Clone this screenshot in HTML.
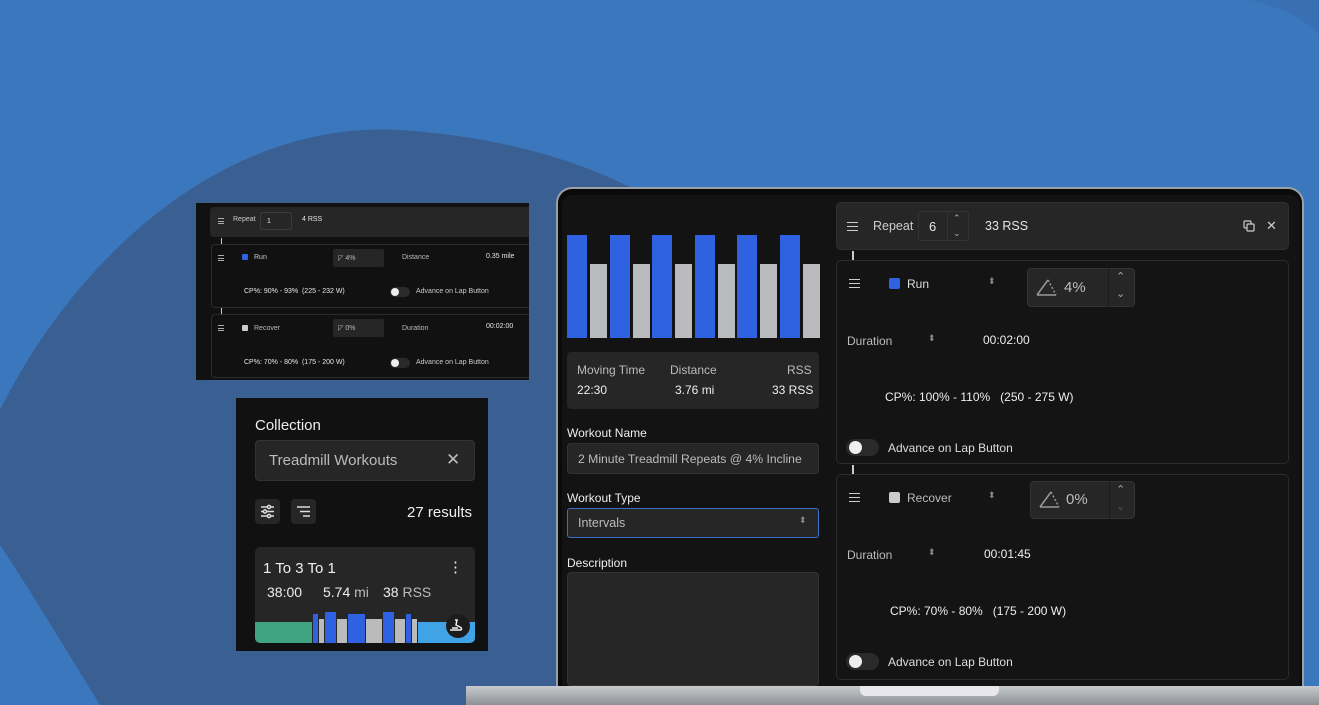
<!DOCTYPE html>
<html><head><meta charset="utf-8"><style>
*{margin:0;padding:0;box-sizing:border-box}
body{width:1319px;height:705px;overflow:hidden;position:relative;background:#3a77bc;font-family:"Liberation Sans",sans-serif;color:#e6e6e6}
.a{position:absolute}
.t{position:absolute;white-space:nowrap}
.card{position:absolute;background:#141414;border:1px solid #2c2c2c;border-radius:5px}
.ham{position:absolute;width:11px;height:9px;border-top:1.5px solid #ccc;border-bottom:1.5px solid #ccc}
.ham:after{content:"";position:absolute;left:0;right:0;top:2.5px;border-top:1.5px solid #ccc}
.sham{position:absolute;width:6px;height:6px;border-top:1px solid #aaa;border-bottom:1px solid #aaa}
.sham:after{content:"";position:absolute;left:0;right:0;top:1.5px;border-top:1px solid #aaa}
.tog{position:absolute;width:33px;height:17px;border-radius:9px;background:#2a2a2a}
.tog:after{content:"";position:absolute;left:3px;top:2px;width:13px;height:13px;border-radius:50%;background:#eee}
.stog{position:absolute;width:20px;height:10px;border-radius:5px;background:#2a2a2a}
.stog:after{content:"";position:absolute;left:1px;top:1px;width:8px;height:8px;border-radius:50%;background:#eee}
</style></head><body>
<svg class="a" style="left:0;top:0" width="1319" height="705">
<path d="M0 410 C80 250 230 120 400 130 C520 138 620 170 700 230 L700 705 L100 705 C60 640 30 590 0 545 Z" fill="#3a5f93"/>
<path d="M1250 0 C1285 8 1305 20 1319 35 L1319 0 Z" fill="#3970b3"/>
</svg>

<!-- small panel 1 -->
<div class="a" style="left:196px;top:203px;width:333px;height:177px;background:#111"></div>
<div class="a" style="left:210px;top:207px;width:319px;height:30px;background:#262626;border-radius:4px 0 0 4px"></div>
<div class="sham" style="left:218px;top:218px"></div>
<div class="t" style="left:233px;top:216px;font-size:7px;color:#ccc">Repeat</div>
<div class="a" style="left:260px;top:212px;width:32px;height:18px;border:1px solid #3a3a3a;border-radius:2px"></div>
<div class="t" style="left:267px;top:218px;font-size:7px">1</div>
<div class="t" style="left:302px;top:216px;font-size:7px">4 RSS</div>
<div class="a" style="left:221px;top:238px;width:1px;height:6px;background:#ccc"></div>
<div class="a" style="left:211px;top:244px;width:318px;height:64px;border:1px solid #2c2c2c;border-right:none;border-radius:4px 0 0 4px"></div>
<div class="sham" style="left:218px;top:255px"></div>
<div class="a" style="left:242px;top:254px;width:6px;height:6px;background:#2f62e0;border-radius:1px"></div>
<div class="t" style="left:254px;top:254px;font-size:7px;color:#ccc">Run</div>
<div class="a" style="left:333px;top:249px;width:51px;height:18px;background:#262626;border-radius:2px"></div>
<div class="t" style="left:338px;top:254px;font-size:7px;color:#bbb">◸ 4%</div>
<div class="t" style="left:402px;top:254px;font-size:7px;color:#bbb">Distance</div>
<div class="t" style="left:486px;top:253px;font-size:7px">0.35 mile</div>
<div class="t" style="left:244px;top:288px;font-size:7px">CP%: 90% - 93%&nbsp;&nbsp;(225 - 232 W)</div>
<div class="stog" style="left:390px;top:287px"></div>
<div class="t" style="left:416px;top:288px;font-size:7px;color:#ccc">Advance on Lap Button</div>
<div class="a" style="left:221px;top:308px;width:1px;height:6px;background:#ccc"></div>
<div class="a" style="left:211px;top:314px;width:318px;height:64px;border:1px solid #2c2c2c;border-right:none;border-radius:4px 0 0 4px"></div>
<div class="sham" style="left:218px;top:325px"></div>
<div class="a" style="left:242px;top:325px;width:6px;height:6px;background:#ccc;border-radius:1px"></div>
<div class="t" style="left:254px;top:325px;font-size:7px;color:#bbb">Recover</div>
<div class="a" style="left:333px;top:319px;width:51px;height:18px;background:#262626;border-radius:2px"></div>
<div class="t" style="left:338px;top:324px;font-size:7px;color:#bbb">◸ 0%</div>
<div class="t" style="left:402px;top:325px;font-size:7px;color:#bbb">Duration</div>
<div class="t" style="left:486px;top:323px;font-size:7px">00:02:00</div>
<div class="t" style="left:244px;top:359px;font-size:7px">CP%: 70% - 80%&nbsp;&nbsp;(175 - 200 W)</div>
<div class="stog" style="left:390px;top:358px"></div>
<div class="t" style="left:416px;top:359px;font-size:7px;color:#ccc">Advance on Lap Button</div>

<!-- collection panel -->
<div class="a" style="left:236px;top:398px;width:252px;height:253px;background:#111"></div>
<div class="t" style="left:255px;top:417px;font-size:15px;color:#eee">Collection</div>
<div class="a" style="left:255px;top:440px;width:220px;height:41px;background:#262626;border:1px solid #333;border-radius:4px"></div>
<div class="t" style="left:269px;top:452px;font-size:15px;color:#bbb">Treadmill Workouts</div>
<div class="t" style="left:446px;top:450px;font-size:17px;color:#bbb">✕</div>
<div class="a" style="left:255px;top:499px;width:25px;height:25px;background:#262626;border-radius:4px"></div>
<svg class="a" style="left:259px;top:503px" width="17" height="17"><g stroke="#ddd" stroke-width="1.5" fill="#262626"><line x1="2" y1="4" x2="15" y2="4"/><line x1="2" y1="8.5" x2="15" y2="8.5"/><line x1="2" y1="13" x2="15" y2="13"/><circle cx="10" cy="4" r="1.6"/><circle cx="6" cy="8.5" r="1.6"/><circle cx="10" cy="13" r="1.6"/></g></svg>
<div class="a" style="left:291px;top:499px;width:25px;height:25px;background:#262626;border-radius:4px"></div>
<svg class="a" style="left:295px;top:503px" width="17" height="17"><g stroke="#ddd" stroke-width="1.5"><line x1="2" y1="4" x2="15" y2="4"/><line x1="5" y1="8.5" x2="15" y2="8.5"/><line x1="8" y1="13" x2="15" y2="13"/></g></svg>
<div class="t" style="left:407px;top:504px;font-size:15px;color:#eee">27 results</div>
<div class="a" style="left:255px;top:547px;width:220px;height:96px;background:#262626;border-radius:5px;overflow:hidden">
 <div class="a" style="left:0;top:75px;width:57px;height:21px;background:#3fa382"></div>
 <div class="a" style="left:58px;top:67px;width:5px;height:29px;background:#2f62e0"></div>
 <div class="a" style="left:64px;top:72px;width:5px;height:24px;background:#bbb"></div>
 <div class="a" style="left:70px;top:65px;width:11px;height:31px;background:#2f62e0"></div>
 <div class="a" style="left:82px;top:72px;width:10px;height:24px;background:#bbb"></div>
 <div class="a" style="left:93px;top:67px;width:17px;height:29px;background:#2f62e0"></div>
 <div class="a" style="left:111px;top:72px;width:16px;height:24px;background:#bbb"></div>
 <div class="a" style="left:128px;top:65px;width:11px;height:31px;background:#2f62e0"></div>
 <div class="a" style="left:140px;top:72px;width:10px;height:24px;background:#bbb"></div>
 <div class="a" style="left:151px;top:67px;width:5px;height:29px;background:#2f62e0"></div>
 <div class="a" style="left:157px;top:72px;width:5px;height:24px;background:#bbb"></div>
 <div class="a" style="left:163px;top:75px;width:57px;height:21px;background:#3fa3e6"></div>
 <div class="a" style="left:191px;top:67px;width:24px;height:24px;border-radius:50%;background:#1c1c1c"></div>
</div>
<svg class="a" style="left:448px;top:617px" width="16" height="16"><path d="M2 13 L12 13 C14 13 14 11 12 10 L8 8 L9 3 L7 3 M4 11 L10 11" stroke="#eee" stroke-width="1.5" fill="none"/></svg>
<div class="t" style="left:263px;top:560px;font-size:15px;color:#eee">1 To 3 To 1</div>
<div class="t" style="left:448px;top:558px;font-size:15px;color:#eee">⋮</div>
<div class="t" style="left:267px;top:584px;font-size:14px;color:#eee">38:00</div>
<div class="t" style="left:323px;top:584px;font-size:14px;color:#eee">5.74 <span style="color:#bbb">mi</span></div>
<div class="t" style="left:383px;top:584px;font-size:14px;color:#eee">38 <span style="color:#bbb">RSS</span></div>

<!-- laptop -->
<div class="a" style="left:556px;top:187px;width:748px;height:510px;background:#0a0a0a;border:2px solid #9aa0a8;border-bottom:none;border-radius:16px 16px 0 0"></div>
<div class="a" style="left:562px;top:195px;width:738px;height:495px;background:#131313;border-radius:10px 10px 0 0"></div>
<div class="a" style="left:466px;top:686px;width:853px;height:19px;background:linear-gradient(#c8cacd,#8d9196)"></div>
<div class="a" style="left:860px;top:686px;width:139px;height:10px;background:#e8e8ea;border-radius:0 0 6px 6px"></div>

<!-- bars -->
<div class="a" style="left:567px;top:235px;width:252px;height:103px">
<div class="a" style="left:0;top:0;width:20px;height:103px;background:#2f62e0"></div>
<div class="a" style="left:23px;top:29px;width:17px;height:74px;background:#b9bbbf"></div>
<div class="a" style="left:42.5px;top:0;width:20px;height:103px;background:#2f62e0"></div>
<div class="a" style="left:65.5px;top:29px;width:17px;height:74px;background:#b9bbbf"></div>
<div class="a" style="left:85px;top:0;width:20px;height:103px;background:#2f62e0"></div>
<div class="a" style="left:108px;top:29px;width:17px;height:74px;background:#b9bbbf"></div>
<div class="a" style="left:127.5px;top:0;width:20px;height:103px;background:#2f62e0"></div>
<div class="a" style="left:150.5px;top:29px;width:17px;height:74px;background:#b9bbbf"></div>
<div class="a" style="left:170px;top:0;width:20px;height:103px;background:#2f62e0"></div>
<div class="a" style="left:193px;top:29px;width:17px;height:74px;background:#b9bbbf"></div>
<div class="a" style="left:212.5px;top:0;width:20px;height:103px;background:#2f62e0"></div>
<div class="a" style="left:235.5px;top:29px;width:17px;height:74px;background:#b9bbbf"></div>
</div>
<div class="a" style="left:567px;top:352px;width:252px;height:57px;background:#262626;border-radius:4px"></div>
<div class="t" style="left:577px;top:363px;font-size:12px;color:#bbb">Moving Time</div>
<div class="t" style="left:670px;top:363px;font-size:12px;color:#bbb">Distance</div>
<div class="t" style="left:787px;top:363px;font-size:12px;color:#bbb">RSS</div>
<div class="t" style="left:577px;top:383px;font-size:12px;color:#eee">22:30</div>
<div class="t" style="left:675px;top:383px;font-size:12px;color:#eee">3.76 mi</div>
<div class="t" style="left:772px;top:383px;font-size:12px;color:#eee">33 RSS</div>
<div class="t" style="left:567px;top:426px;font-size:12px;color:#eee">Workout Name</div>
<div class="a" style="left:567px;top:443px;width:252px;height:31px;background:#262626;border:1px solid #333;border-radius:4px"></div>
<div class="t" style="left:578px;top:452px;font-size:12.2px;color:#bbb">2 Minute Treadmill Repeats @ 4% Incline</div>
<div class="t" style="left:567px;top:491px;font-size:12px;color:#eee">Workout Type</div>
<div class="a" style="left:567px;top:508px;width:252px;height:30px;background:#262626;border:1px solid #3a6fc2;border-radius:3px"></div>
<div class="t" style="left:578px;top:516px;font-size:12.5px;color:#bbb">Intervals</div>
<div class="t" style="left:799px;top:515px;font-size:9px;color:#888">⬍</div>
<div class="t" style="left:567px;top:556px;font-size:12px;color:#eee">Description</div>
<div class="a" style="left:567px;top:572px;width:252px;height:114px;background:#262626;border:1px solid #333;border-radius:4px"></div>

<!-- right column -->
<div class="a" style="left:836px;top:202px;width:453px;height:48px;background:#262626;border:1px solid #2f2f2f;border-radius:5px"></div>
<div class="ham" style="left:847px;top:222px"></div>
<div class="t" style="left:873px;top:219px;font-size:12.5px;color:#ccc">Repeat</div>
<div class="a" style="left:918px;top:211px;width:51px;height:30px;border:1px solid #333;border-radius:3px"></div>
<div class="a" style="left:947px;top:211px;width:1px;height:30px;background:#333"></div>
<div class="t" style="left:929px;top:219px;font-size:13px">6</div>
<div class="t" style="left:953px;top:213px;font-size:9px;color:#aaa">⌃</div>
<div class="t" style="left:953px;top:228px;font-size:9px;color:#aaa">⌄</div>
<div class="t" style="left:985px;top:219px;font-size:12.5px">33 RSS</div>
<svg class="a" style="left:1243px;top:220px" width="12" height="12"><rect x="1" y="1" width="7" height="7" rx="1" stroke="#ccc" fill="none" stroke-width="1.2"/><rect x="4" y="4" width="7" height="7" rx="1" stroke="#ccc" fill="#262626" stroke-width="1.2"/></svg>
<div class="t" style="left:1266px;top:218px;font-size:13px;color:#ccc">✕</div>
<div class="a" style="left:852px;top:251px;width:2px;height:9px;background:#ccc"></div>

<div class="card" style="left:836px;top:260px;width:453px;height:204px"></div>
<div class="ham" style="left:849px;top:279px"></div>
<div class="a" style="left:889px;top:278px;width:11px;height:11px;background:#2f62e0;border-radius:2px"></div>
<div class="t" style="left:907px;top:277px;font-size:12px;color:#ddd">Run</div>
<div class="t" style="left:988px;top:276px;font-size:9px;color:#888">⬍</div>
<div class="a" style="left:1027px;top:268px;width:108px;height:39px;background:#262626;border:1px solid #333;border-radius:4px"></div>
<div class="a" style="left:1108px;top:268px;width:1px;height:39px;background:#1a1a1a"></div>
<svg class="a" style="left:1036px;top:278px" width="22" height="18"><path d="M1 17 L12 2 M1 17 L20 17" stroke="#999" fill="none" stroke-width="1.5"/><path d="M12 2 L20 17" stroke="#999" fill="none" stroke-width="1.5" stroke-dasharray="2 2"/></svg>
<div class="t" style="left:1064px;top:279px;font-size:15px;color:#bbb">4%</div>
<div class="t" style="left:1116px;top:270px;font-size:11px;color:#aaa">⌃</div>
<div class="t" style="left:1116px;top:287px;font-size:11px;color:#aaa">⌄</div>
<div class="t" style="left:847px;top:334px;font-size:12px;color:#bbb">Duration</div>
<div class="t" style="left:928px;top:333px;font-size:9px;color:#888">⬍</div>
<div class="t" style="left:983px;top:333px;font-size:12px;color:#eee">00:02:00</div>
<div class="t" style="left:885px;top:390px;font-size:12px;color:#eee">CP%: 100% - 110%&nbsp;&nbsp;&nbsp;(250 - 275 W)</div>
<div class="tog" style="left:846px;top:439px"></div>
<div class="t" style="left:888px;top:441px;font-size:12px;color:#ddd">Advance on Lap Button</div>
<div class="a" style="left:852px;top:465px;width:2px;height:9px;background:#ccc"></div>

<div class="card" style="left:836px;top:474px;width:453px;height:206px"></div>
<div class="ham" style="left:849px;top:493px"></div>
<div class="a" style="left:889px;top:492px;width:11px;height:11px;background:#ccc;border-radius:2px"></div>
<div class="t" style="left:907px;top:491px;font-size:12px;color:#bbb">Recover</div>
<div class="t" style="left:988px;top:490px;font-size:9px;color:#888">⬍</div>
<div class="a" style="left:1030px;top:481px;width:105px;height:38px;background:#262626;border:1px solid #333;border-radius:4px"></div>
<div class="a" style="left:1109px;top:481px;width:1px;height:38px;background:#1a1a1a"></div>
<svg class="a" style="left:1039px;top:490px" width="22" height="18"><path d="M1 17 L12 2 M1 17 L20 17" stroke="#999" fill="none" stroke-width="1.5"/><path d="M12 2 L20 17" stroke="#999" fill="none" stroke-width="1.5" stroke-dasharray="2 2"/></svg>
<div class="t" style="left:1066px;top:491px;font-size:15px;color:#bbb">0%</div>
<div class="t" style="left:1116px;top:483px;font-size:11px;color:#aaa">⌃</div>
<div class="t" style="left:1116px;top:500px;font-size:11px;color:#555">⌄</div>
<div class="t" style="left:847px;top:548px;font-size:12px;color:#bbb">Duration</div>
<div class="t" style="left:928px;top:547px;font-size:9px;color:#888">⬍</div>
<div class="t" style="left:984px;top:547px;font-size:12px;color:#eee">00:01:45</div>
<div class="t" style="left:890px;top:604px;font-size:12px;color:#eee">CP%: 70% - 80%&nbsp;&nbsp;&nbsp;(175 - 200 W)</div>
<div class="tog" style="left:846px;top:653px"></div>
<div class="t" style="left:888px;top:655px;font-size:12px;color:#ddd">Advance on Lap Button</div>
</body></html>
